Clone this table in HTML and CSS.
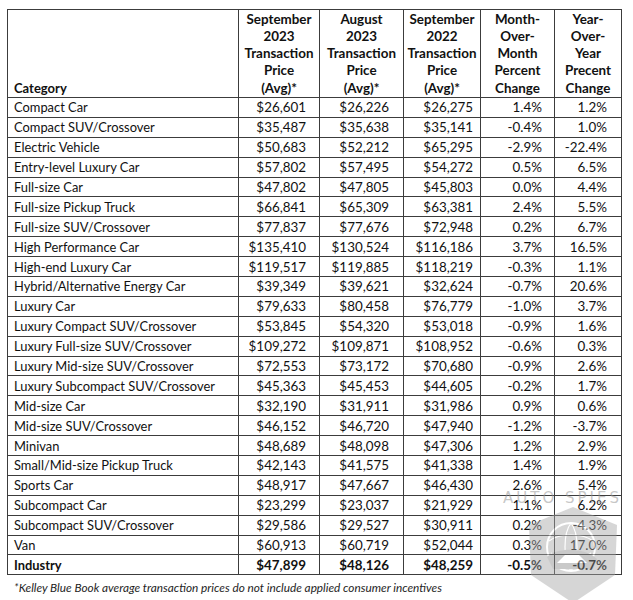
FILE: index.html
```html
<!DOCTYPE html>
<html>
<head>
<meta charset="utf-8">
<link rel="stylesheet" href="styles.css">
</head>
<body>
<div class="page">
  <table class="prices">
    <colgroup>
      <col class="c-cat"><col class="c-sep23"><col class="c-aug23"><col class="c-sep22"><col class="c-mom"><col class="c-yoy">
    </colgroup>
    <thead>
      <tr>
        <th class="cat">Category</th>
        <th>September<br>2023<br>Transaction<br>Price<br>(Avg)*</th>
        <th>August<br>2023<br>Transaction<br>Price<br>(Avg)*</th>
        <th>September<br>2022<br>Transaction<br>Price<br>(Avg)*</th>
        <th>Month-<br>Over-<br>Month<br>Percent<br>Change</th>
        <th>Year-<br>Over-<br>Year<br>Precent<br>Change</th>
      </tr>
    </thead>
    <tbody>
      <tr><td>Compact Car</td><td>$26,601</td><td>$26,226</td><td>$26,275</td><td>1.4%</td><td>1.2%</td></tr>
      <tr><td>Compact SUV/Crossover</td><td>$35,487</td><td>$35,638</td><td>$35,141</td><td>-0.4%</td><td>1.0%</td></tr>
      <tr><td>Electric Vehicle</td><td>$50,683</td><td>$52,212</td><td>$65,295</td><td>-2.9%</td><td>-22.4%</td></tr>
      <tr><td>Entry-level Luxury Car</td><td>$57,802</td><td>$57,495</td><td>$54,272</td><td>0.5%</td><td>6.5%</td></tr>
      <tr><td>Full-size Car</td><td>$47,802</td><td>$47,805</td><td>$45,803</td><td>0.0%</td><td>4.4%</td></tr>
      <tr><td>Full-size Pickup Truck</td><td>$66,841</td><td>$65,309</td><td>$63,381</td><td>2.4%</td><td>5.5%</td></tr>
      <tr><td>Full-size SUV/Crossover</td><td>$77,837</td><td>$77,676</td><td>$72,948</td><td>0.2%</td><td>6.7%</td></tr>
      <tr><td>High Performance Car</td><td>$135,410</td><td>$130,524</td><td>$116,186</td><td>3.7%</td><td>16.5%</td></tr>
      <tr><td>High-end Luxury Car</td><td>$119,517</td><td>$119,885</td><td>$118,219</td><td>-0.3%</td><td>1.1%</td></tr>
      <tr><td>Hybrid/Alternative Energy Car</td><td>$39,349</td><td>$39,621</td><td>$32,624</td><td>-0.7%</td><td>20.6%</td></tr>
      <tr><td>Luxury Car</td><td>$79,633</td><td>$80,458</td><td>$76,779</td><td>-1.0%</td><td>3.7%</td></tr>
      <tr><td>Luxury Compact SUV/Crossover</td><td>$53,845</td><td>$54,320</td><td>$53,018</td><td>-0.9%</td><td>1.6%</td></tr>
      <tr><td>Luxury Full-size SUV/Crossover</td><td>$109,272</td><td>$109,871</td><td>$108,952</td><td>-0.6%</td><td>0.3%</td></tr>
      <tr><td>Luxury Mid-size SUV/Crossover</td><td>$72,553</td><td>$73,172</td><td>$70,680</td><td>-0.9%</td><td>2.6%</td></tr>
      <tr><td>Luxury Subcompact SUV/Crossover</td><td>$45,363</td><td>$45,453</td><td>$44,605</td><td>-0.2%</td><td>1.7%</td></tr>
      <tr><td>Mid-size Car</td><td>$32,190</td><td>$31,911</td><td>$31,986</td><td>0.9%</td><td>0.6%</td></tr>
      <tr><td>Mid-size SUV/Crossover</td><td>$46,152</td><td>$46,720</td><td>$47,940</td><td>-1.2%</td><td>-3.7%</td></tr>
      <tr><td>Minivan</td><td>$48,689</td><td>$48,098</td><td>$47,306</td><td>1.2%</td><td>2.9%</td></tr>
      <tr><td>Small/Mid-size Pickup Truck</td><td>$42,143</td><td>$41,575</td><td>$41,338</td><td>1.4%</td><td>1.9%</td></tr>
      <tr><td>Sports Car</td><td>$48,917</td><td>$47,667</td><td>$46,430</td><td>2.6%</td><td>5.4%</td></tr>
      <tr><td>Subcompact Car</td><td>$23,299</td><td>$23,037</td><td>$21,929</td><td>1.1%</td><td>6.2%</td></tr>
      <tr><td>Subcompact SUV/Crossover</td><td>$29,586</td><td>$29,527</td><td>$30,911</td><td>0.2%</td><td>-4.3%</td></tr>
      <tr><td>Van</td><td>$60,913</td><td>$60,719</td><td>$52,044</td><td>0.3%</td><td>17.0%</td></tr>
      <tr class="total"><td>Industry</td><td>$47,899</td><td>$48,126</td><td>$48,259</td><td>-0.5%</td><td>-0.7%</td></tr>
    </tbody>
  </table>
  <p class="note">*Kelley Blue Book average transaction prices do not include applied consumer incentives</p>

  <div class="watermark" aria-hidden="true">
    <span class="wm-text">AUTO SPIES</span>
    <svg class="wm-shield" width="92" height="96" viewBox="0 0 92 96">
      <path d="M46 0 L90 18 L88 68 L46 96 L4 68 L2 18 Z" fill="#a5a5a5"/>
      <circle cx="44" cy="40" r="24" fill="none" stroke="#ffffff" stroke-width="2"/>
      <path d="M22 34 C32 26 56 26 66 34 M24 46 C34 52 54 52 64 46 M44 16 C36 26 36 54 44 64 M44 16 C52 26 52 54 44 64" fill="none" stroke="#ffffff" stroke-width="1.2"/>
      <path d="M20 50 C30 40 58 40 70 52 L66 62 L26 62 Z" fill="#8a8a8a"/>
      <path d="M30 56 L38 48 L52 48 L60 56 Z" fill="#ffffff"/>
    </svg>
  </div>
</div>
</body>
</html>
```

FILE: styles.css
```css
html, body {
  margin: 0;
  padding: 0;
  background: #ffffff;
}

.page {
  position: relative;
  width: 633px;
  height: 600px;
  padding: 9px 0 0 7px;
  box-sizing: border-box;
  font-family: "Lato", "Open Sans", sans-serif;
  color: #111111;
  overflow: hidden;
}

.prices {
  border-collapse: collapse;
  table-layout: fixed;
  width: 614px;
  font-size: 13.4px;
}

.c-cat { width: 231px; }
.c-sep23 { width: 81px; }
.c-aug23 { width: 84px; }
.c-sep22 { width: 77px; }
.c-mom { width: 74px; }
.c-yoy { width: 67px; }

.prices th,
.prices td {
  border: 1px solid #3c3c3c;
  padding: 0;
}

.prices th {
  height: 87px;
  font-weight: 700;
  line-height: 17.3px;
  text-align: center;
  vertical-align: bottom;
  padding-bottom: 0;
}

.prices th.cat {
  text-align: left;
  padding-left: 6px;
  font-size: 13px;
}

.prices td {
  height: 18.9px;
  line-height: 16px;
  text-align: right;
  white-space: nowrap;
}

.prices td:nth-child(1) { text-align: left; padding-left: 6px; font-size: 12.9px; }
.prices td:nth-child(2) { padding-right: 13px; }
.prices td:nth-child(3) { padding-right: 14px; }
.prices td:nth-child(4) { padding-right: 7px; }
.prices td:nth-child(5) { padding-right: 12px; }
.prices td:nth-child(6) { padding-right: 14px; }

.prices tr.total td {
  font-weight: 700;
}

.note {
  margin: 5px 0 0 7px;
  font-size: 11.8px;
  font-style: italic;
  color: #1e1e1e;
}

.watermark {
  position: absolute;
  left: 503px;
  top: 489px;
  width: 130px;
  height: 111px;
}

.wm-text {
  position: absolute;
  left: 0;
  top: 0;
  font-family: "DejaVu Sans", sans-serif;
  font-size: 15px;
  letter-spacing: 3px;
  color: rgba(150, 150, 150, 0.55);
  white-space: nowrap;
}

.wm-shield {
  position: absolute;
  left: 24px;
  top: 18px;
  opacity: 0.45;
}
```
